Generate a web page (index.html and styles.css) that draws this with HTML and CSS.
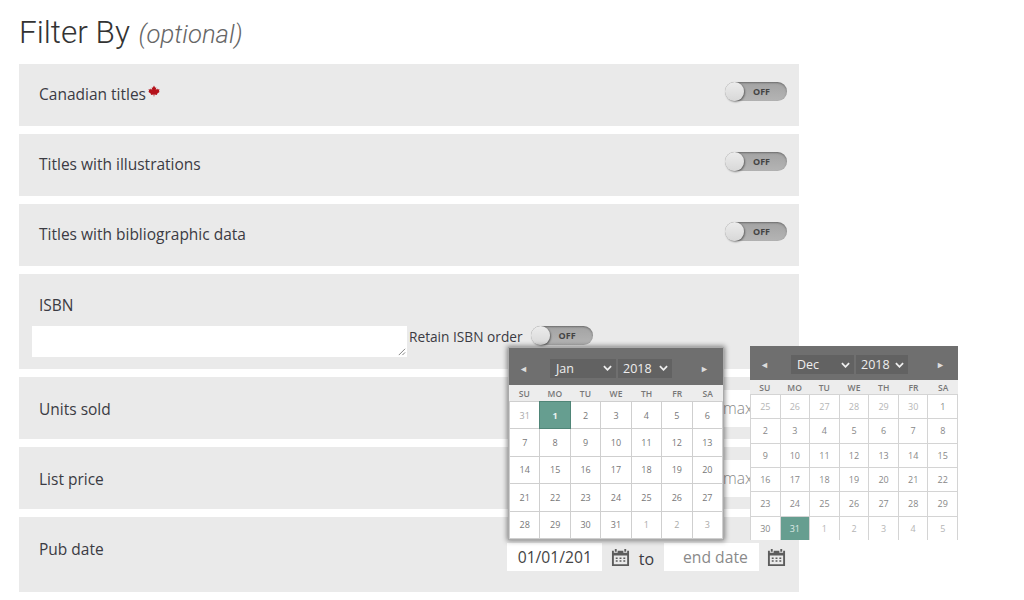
FILE: index.html
```html
<!DOCTYPE html>
<html lang="en">
<head>
<meta charset="utf-8">
<title>Filter By</title>
<link rel="stylesheet" href="styles.css">
</head>
<body>
<main class="page">
  <h1 class="title">Filter By <em class="optional">(optional)</em></h1>
  <div class="rows">
    <section class="row">
      <span class="label">Canadian titles<svg class="leaf" viewBox="0 0 24 24"><path d="M12 1l-2.400 4.400-2.200-1 1 5.600-3-3-.8 1.900-3.600-.6 1.200 3.900L.6 13.500l5.600 4.600-.6 1.900 5.600-.8.300 3.800h1l.3-3.800 5.600.8-.6-1.900 5.600-4.600-1.600-1.200 1.200-3.900-3.600.6-.8-1.900-3 3 1-5.600-2.200 1z"/></svg></span>
      <span class="switch"><i class="knob"></i><b>OFF</b></span>
    </section>
    <section class="row">
      <span class="label">Titles with illustrations</span>
      <span class="switch"><i class="knob"></i><b>OFF</b></span>
    </section>
    <section class="row">
      <span class="label">Titles with bibliographic data</span>
      <span class="switch"><i class="knob"></i><b>OFF</b></span>
    </section>
    <section class="row row-isbn">
      <span class="label">ISBN</span>
      <div class="isbn-line">
        <span class="textarea"><svg class="grip" viewBox="0 0 10 10"><path d="M9 2L2 9M9 6L6 9"/></svg></span>
        <span class="retain">Retain ISBN order</span>
        <span class="switch"><i class="knob"></i><b>OFF</b></span>
      </div>
    </section>
    <section class="row row-value">
      <span class="label">Units sold</span>
      <span class="max">max</span>
    </section>
    <section class="row row-value">
      <span class="label">List price</span>
      <span class="max">max</span>
    </section>
    <section class="row row-date">
      <span class="label">Pub date</span>
      <div class="dates">
        <span class="date">01/01/201</span>
        <svg class="cal-icon" viewBox="0 0 20 20"><path d="M4 1h2v3H4zM14 1h2v3h-2z"/><path fill-rule="evenodd" d="M1 3h2v2h4V3h6v2h4V3h2v16H1zM3 8v9h14V8zM5 10h2v1.500H5zM9 10h2v1.500H9zM13 10h2v1.500h-2zM5 13h2v1.500H5zM9 13h2v1.500H9zM13 13h2v1.500h-2z"/></svg>
        <span class="to">to</span>
        <span class="date date-empty">end date</span>
        <svg class="cal-icon cal-icon-end" viewBox="0 0 20 20"><path d="M4 1h2v3H4zM14 1h2v3h-2z"/><path fill-rule="evenodd" d="M1 3h2v2h4V3h6v2h4V3h2v16H1zM3 8v9h14V8zM5 10h2v1.500H5zM9 10h2v1.500H9zM13 10h2v1.500h-2zM5 13h2v1.500H5zM9 13h2v1.500H9zM13 13h2v1.500h-2z"/></svg>
      </div>
    </section>
  </div>
</main>

<div class="calendar cal-jan">
  <div class="cal-head">
    <span class="arrow">◄</span>
    <span class="picker picker-m">Jan<svg viewBox="0 0 10 6"><path d="M1 1l4 4 4-4"/></svg></span>
    <span class="picker picker-y">2018<svg viewBox="0 0 10 6"><path d="M1 1l4 4 4-4"/></svg></span>
    <span class="arrow">►</span>
  </div>
  <div class="cal-days"><span>SU</span><span>MO</span><span>TU</span><span>WE</span><span>TH</span><span>FR</span><span>SA</span></div>
  <div class="cal-grid">
    <span class="out">31</span><span class="on">1</span><span>2</span><span>3</span><span>4</span><span>5</span><span>6</span>
    <span>7</span><span>8</span><span>9</span><span>10</span><span>11</span><span>12</span><span>13</span>
    <span>14</span><span>15</span><span>16</span><span>17</span><span>18</span><span>19</span><span>20</span>
    <span>21</span><span>22</span><span>23</span><span>24</span><span>25</span><span>26</span><span>27</span>
    <span>28</span><span>29</span><span>30</span><span>31</span><span class="out">1</span><span class="out">2</span><span class="out">3</span>
  </div>
</div>

<div class="calendar cal-dec">
  <div class="cal-head">
    <span class="arrow">◄</span>
    <span class="picker picker-m">Dec<svg viewBox="0 0 10 6"><path d="M1 1l4 4 4-4"/></svg></span>
    <span class="picker picker-y">2018<svg viewBox="0 0 10 6"><path d="M1 1l4 4 4-4"/></svg></span>
    <span class="arrow">►</span>
  </div>
  <div class="cal-days"><span>SU</span><span>MO</span><span>TU</span><span>WE</span><span>TH</span><span>FR</span><span>SA</span></div>
  <div class="cal-grid">
    <span class="out">25</span><span class="out">26</span><span class="out">27</span><span class="out">28</span><span class="out">29</span><span class="out">30</span><span>1</span>
    <span>2</span><span>3</span><span>4</span><span>5</span><span>6</span><span>7</span><span>8</span>
    <span>9</span><span>10</span><span>11</span><span>12</span><span>13</span><span>14</span><span>15</span>
    <span>16</span><span>17</span><span>18</span><span>19</span><span>20</span><span>21</span><span>22</span>
    <span>23</span><span>24</span><span>25</span><span>26</span><span>27</span><span>28</span><span>29</span>
    <span>30</span><span class="on">31</span><span class="out">1</span><span class="out">2</span><span class="out">3</span><span class="out">4</span><span class="out">5</span>
  </div>
</div>
</body>
</html>
```

FILE: styles.css
```css
* { box-sizing: border-box; }
html, body { margin: 0; height: 100%; }
body {
  position: relative;
  width: 1024px;
  height: 600px;
  overflow: hidden;
  background: #fff;
  font-family: "Open Sans", "Liberation Sans", sans-serif;
  color: #3b3b43;
}
.page { width: 799px; padding: 13px 0 0 19px; }
.title {
  margin: 0 0 11px;
  height: 40px;
  line-height: 40px;
  font-family: Roboto, "Open Sans", sans-serif;
  font-size: 31.500px;
  font-weight: 300;
  color: #333;
}
.optional { font-size: 25.700px; font-style: italic; color: #666; margin-left: 1px; }
.rows { display: flex; flex-direction: column; gap: 8px; }
.row {
  display: flex;
  align-items: flex-start;
  justify-content: space-between;
  height: 62px;
  padding: 18px 12px 0 20px;
  background: #eaeaea;
}
.label { font-size: 15.500px; line-height: 20px; margin-top: 2px; }
.leaf { width: 12px; height: 12px; fill: #b5121b; vertical-align: top; margin: 1px 0 0 2px; }

.switch {
  position: relative;
  display: block;
  flex: none;
  width: 62px;
  height: 19px;
  border-radius: 10px;
  background: linear-gradient(#a3a3a3, #b4b4b4);
  box-shadow: inset 0 1px 2px rgba(0,0,0,.35);
}
.switch b { position: absolute; left: 28px; top: 0; font-size: 9px; line-height: 20px; font-weight: 700; color: #444; }
.knob {
  position: absolute; left: 0; top: 0;
  width: 19px; height: 19px; border-radius: 50%;
  background: linear-gradient(#ececec, #d8d8d8);
  box-shadow: 1px 1px 2px rgba(0,0,0,.45);
}

.row-isbn { display: block; height: 95px; padding: 19px 0 0 20px; }
.row-isbn .label { display: block; margin-top: 2px; }
.isbn-line { display: flex; align-items: flex-start; margin: 11px 0 0 -7px; }
.textarea {
  position: relative;
  display: block;
  width: 375px;
  height: 31px;
  background: #fff;
}
.grip { position: absolute; right: 1px; bottom: 1px; width: 9px; height: 9px; fill: none; stroke: #777; stroke-width: 1; }
.retain { font-size: 13.700px; line-height: 22px; margin: 0 8px 0 2px; }

.row-value { padding-top: 13px; }
.row-value .label { margin-top: 9px; }
.max {
  display: block;
  width: 120px;
  height: 37px;
  padding-left: 56px;
  background: #fff;
  font-size: 15.500px;
  line-height: 36px;
  font-weight: 300;
  color: #888;
}

.row-date { height: 75px; padding: 0 13px 0 20px; }
.row-date .label { margin-top: 22px; }
.dates { display: flex; align-items: center; margin-top: 26px; }
.date {
  display: block;
  width: 95px;
  height: 28px;
  background: #fff;
  font-size: 15.700px;
  line-height: 28px;
  padding-left: 11px;
  color: #444;
  overflow: hidden;
  white-space: nowrap;
}
.date-empty { color: #8a8a8a; padding-left: 19px; }
.cal-icon { width: 19px; height: 19px; fill: #5c5c5c; margin-left: 9px; }
.cal-icon-end { margin-left: 8px; }
.to { font-size: 16px; margin: 3px 10px 0 9px; }

.calendar {
  position: absolute;
  display: flex;
  flex-direction: column;
  background: #fff;
  font-size: 9px;
  color: #777;
}
.cal-jan { left: 508px; top: 347px; width: 216px; height: 193px; border: 1px solid #aaa; box-shadow: 0 0 5px 1px rgba(0,0,0,.45); }
.cal-dec { left: 750px; top: 346px; width: 208px; height: 194px; overflow: hidden; }
.cal-head {
  display: flex;
  align-items: center;
  background: #6f6f6f;
  color: #eee;
}
.cal-jan .cal-head { height: 37px; padding: 3px 0 0 10px; }
.cal-dec .cal-head { height: 34px; padding: 3px 0 0 10px; }
.arrow { width: 12px; font-size: 9px; color: #ddd; flex: none; }
.picker {
  display: flex;
  align-items: center;
  justify-content: space-between;
  height: 19px;
  background: #626262;
  color: #eee;
  font-size: 12.500px;
  padding: 0 4px 0 6px;
}
.picker svg { width: 9px; height: 6px; fill: none; stroke: #eee; stroke-width: 2; }
.picker-m { margin-left: 19px; width: 66px; }
.picker-y { margin-left: 2px; width: 54px; margin-right: 28px; padding-left: 5px; }
.cal-dec .picker-m { margin-left: 19px; width: 63px; }
.cal-dec .picker-y { width: 52px; margin-right: 28px; }
.cal-days {
  display: grid;
  grid-template-columns: repeat(7, 1fr);
  align-items: center;
  text-align: center;
  height: 16px;
  background: #ededed;
  font-size: 8.500px;
  font-weight: 600;
  color: #777;
}
.cal-dec .cal-days { height: 14px; }
.cal-grid {
  flex: 1;
  display: grid;
  grid-template-columns: repeat(7, 1fr);
  grid-auto-rows: 1fr;
  gap: 1px;
  padding: 1px;
  background: #cfcfcf;
}
.cal-grid span { display: flex; align-items: center; justify-content: center; background: #fff; }
.cal-grid .out { color: #aaa; }
.cal-grid .on { background: #669e90; color: #eaf3f0; font-weight: 700; box-shadow: 0 0 0 1px #4f8577; }
.cal-dec .cal-grid { padding: 1px 1px 0; background: #d4d4d4; }
.cal-dec .cal-grid span { color: #888; }
.cal-dec .cal-grid .out { color: #b5b5b5; }
.cal-dec .cal-grid .on { color: #dfeae7; font-weight: 400; box-shadow: none; }
```
